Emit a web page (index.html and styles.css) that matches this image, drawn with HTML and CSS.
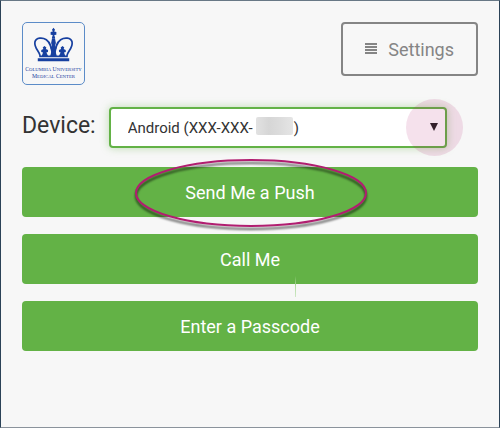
FILE: index.html
```html
<!DOCTYPE html>
<html lang="en">
<head>
<meta charset="utf-8">
<meta name="viewport" content="width=device-width, initial-scale=1">
<title>Choose a device</title>
<link rel="stylesheet" href="styles.css">
</head>
<body>
<main class="panel">
  <header class="top">
    <div class="logo">
      <svg class="logo-art" viewBox="0 0 64 64" role="img" aria-label="Columbia University Medical Center">
        <g fill="#1740a0">
          <path d="M32 5l1.600 2.200-.9 1.600 2.300.6v3l-2.200.2 1 3.400h-3.600l1-3.400-2.200-.2v-3l2.300-.6-.9-1.600z"/>
          <path d="M30.500 16h3l1 5-1 3 1.800 2-1.300 3 1.500 6h-7l1.500-6-1.300-3 1.800-2-1-3z"/>
          <path d="M22.500 24l2 1.800-.5 1.400 2.300 1-.1 2.300-1.700.5 2 4h-7l1.500-4-1.900-.6.1-2.200 2.200-.9-.7-1.500z"/>
          <path d="M41.500 24l-2 1.800.5 1.400-2.300 1 .1 2.300 1.700.5-2 4h7l-1.500-4 1.900-.6-.1-2.200-2.200-.9.7-1.500z"/>
          <path d="M15.500 37h33v3h-33z"/>
        </g>
        <g fill="none" stroke="#1740a0" stroke-width="1.800">
          <path d="M18 34.500C17 29.500 11.500 26 12.500 20c1.200-5 8-5 12-2.500 4.500 3 5.500 9 6.500 16"/>
          <path d="M46 34.500C47 29.500 52.500 26 51.500 20c-1.200-5-8-5-12-2.500-4.500 3-5.500 9-6.500 16"/>
          <path d="M17 35h30"/>
        </g>
        <text class="logo-text" x="32" y="50">C<tspan class="logo-caps">OLUMBIA</tspan> U<tspan class="logo-caps">NIVERSITY</tspan></text>
        <text class="logo-text" x="32" y="58">M<tspan class="logo-caps">EDICAL</tspan> C<tspan class="logo-caps">ENTER</tspan></text>
      </svg>
    </div>
    <button type="button" class="settings">
      <svg class="menu-icon" viewBox="0 0 12 12" aria-hidden="true"><path d="M0 1h12M0 4h12M0 7h12M0 10h12"/></svg>
      Settings
    </button>
  </header>

  <div class="device">
    <label class="device-label" for="device">Device:</label>
    <div class="device-field">
      <select id="device" class="device-select">
        <option>Android (XXX-XXX-&nbsp;&nbsp;&nbsp;&nbsp;&nbsp;&nbsp;&nbsp;&nbsp;&nbsp;&nbsp;&nbsp;)</option>
      </select>
      <span class="redaction"></span>
      <svg class="arrow" viewBox="0 0 8 8" aria-hidden="true"><path d="M0 0h8L4 8z"/></svg>
      <span class="spot"></span>
    </div>
  </div>

  <div class="actions">
    <div class="highlighted">
      <button type="button" class="action">Send Me a Push</button>
      <svg class="ring" viewBox="0 0 240 76" aria-hidden="true"><ellipse cx="120" cy="35" rx="115" ry="33"/></svg>
    </div>
    <div class="call">
      <button type="button" class="action">Call Me</button>
      <span class="tick"></span>
    </div>
    <button type="button" class="action">Enter a Passcode</button>
  </div>
</main>
</body>
</html>
```

FILE: styles.css
```css
* {
  box-sizing: border-box;
}

body {
  margin: 0;
  background: #f7f7f7;
  color: #333;
  font-family: Roboto, "Liberation Sans", sans-serif;
}

.panel {
  min-height: 100vh;
  padding: 21px;
  border: 1px solid #2b4257;
  border-top-color: #687886;
  border-bottom-color: #8b939c;
}

.top {
  display: flex;
  justify-content: space-between;
  align-items: flex-start;
}

.logo {
  width: 63px;
  height: 63px;
  border: 1px solid #5c8cc8;
  border-radius: 5px;
}

.logo-art {
  display: block;
  width: 100%;
  height: 100%;
}

.logo-text {
  fill: #1740a0;
  font-family: "Liberation Serif", serif;
  font-size: 6px;
  text-anchor: middle;
}

.logo-caps {
  font-size: 5px;
}

.settings {
  display: flex;
  align-items: center;
  justify-content: center;
  gap: 11px;
  height: 54px;
  padding: 0 22px;
  border: 2px solid #858585;
  border-radius: 4px;
  background: transparent;
  color: #858585;
  font: 18px Roboto, "Liberation Sans", sans-serif;
}

.menu-icon {
  width: 12px;
  height: 12px;
  fill: none;
  stroke: #858585;
  stroke-width: 2;
}

.device {
  display: flex;
  align-items: center;
  gap: 13px;
  margin: 22px 31px 19px 0;
}

.device-label {
  padding-bottom: 4px;
  font-size: 23px;
  line-height: 28px;
}

.device-field {
  position: relative;
  flex: 1;
}

.device-select {
  display: block;
  width: 100%;
  height: 41px;
  padding: 0 17px;
  border: 2px solid #63b246;
  border-radius: 4px;
  outline: none;
  appearance: none;
  background: #fff;
  box-shadow: 0 0 8px rgba(99, 178, 70, 0.4);
  color: #333;
  font: 15px Roboto, "Liberation Sans", sans-serif;
}

.redaction {
  position: absolute;
  top: 10px;
  left: 147px;
  width: 37px;
  height: 18px;
  border-radius: 2px;
  background: linear-gradient(90deg, #e2e2e2, #d6d6d6 35%, #dcdcdc 65%, #e5e5e5);
}

.arrow {
  position: absolute;
  top: 16px;
  right: 9px;
  width: 8px;
  height: 8px;
  fill: #222;
}

.spot {
  position: absolute;
  top: -8px;
  right: -16px;
  width: 57px;
  height: 57px;
  border-radius: 50%;
  background: rgba(179, 27, 112, 0.13);
  pointer-events: none;
}

.actions {
  display: flex;
  flex-direction: column;
  gap: 17px;
}

.action {
  display: block;
  width: 100%;
  height: 50px;
  padding: 0;
  border: 0;
  border-radius: 4px;
  background: #63b246;
  color: #fff;
  font: 18px Roboto, "Liberation Sans", sans-serif;
}

.highlighted,
.call {
  position: relative;
}

.ring {
  position: absolute;
  z-index: 1;
  top: -9px;
  left: calc(50% - 119px);
  width: 240px;
  height: 76px;
  fill: none;
  stroke: #b11e70;
  stroke-width: 2;
  filter: drop-shadow(0 3px 1px rgba(0, 0, 0, 0.6));
  pointer-events: none;
}

.tick {
  position: absolute;
  top: 42px;
  left: 60%;
  width: 1px;
  height: 21px;
  margin-left: -1px;
  background: linear-gradient(#63b246, #b5dba6 50%, #cfe8c5);
}
```
